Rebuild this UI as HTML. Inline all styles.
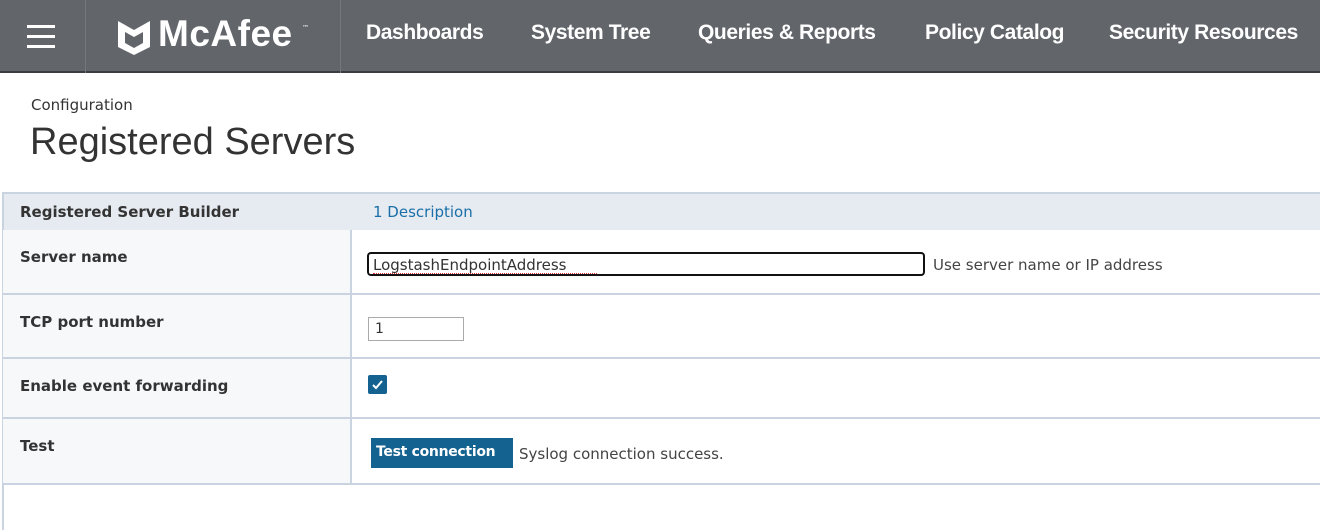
<!DOCTYPE html>
<html><head><style>
*{margin:0;padding:0;box-sizing:border-box}
body{width:1320px;height:530px;overflow:hidden;background:#fff;font-family:"DejaVu Sans","Liberation Sans",sans-serif;position:relative}
.hdr{position:absolute;left:0;top:0;width:1320px;height:73px;background:#62666b;border-bottom:2px solid #3a3c3f}
.div{position:absolute;top:0;width:1px;height:73px;background:#74787d}
.nav{position:absolute;top:21px;color:#fff;font-size:21px;font-family:"Liberation Sans",sans-serif;font-weight:bold;letter-spacing:-0.4px}
.abs{position:absolute}
.lbl{position:absolute;left:20px;font-size:15px;font-weight:bold;color:#333}
.hl{position:absolute;left:2px;width:1318px;height:2px;background:#c9d4e0}
</style></head><body>
<div class="hdr">
 <div class="abs" style="left:27px;top:25px;width:28px;height:3px;background:#fff"></div>
 <div class="abs" style="left:27px;top:35px;width:28px;height:3px;background:#fff"></div>
 <div class="abs" style="left:27px;top:45px;width:28px;height:3px;background:#fff"></div>
 <div class="div" style="left:85px"></div>
 <svg class="abs" style="left:117px;top:20px" width="34" height="36" viewBox="0 0 34 36"><path d="M1 1 L17 10 L33 1 V27 L17 35 L1 27 Z M8 12 V23 L17 28 L26 23 V12 L17 17 Z" fill="#fff" fill-rule="evenodd"/></svg>
 <div class="nav" style="left:158px;top:13px;font-size:37px;letter-spacing:0.5px">McAfee</div>
 <div class="abs" style="left:302px;top:24px;color:#fff;font-size:7px">™</div>
 <div class="div" style="left:340px"></div>
 <div class="nav" style="left:366px">Dashboards</div>
 <div class="nav" style="left:531px">System Tree</div>
 <div class="nav" style="left:698px">Queries &amp; Reports</div>
 <div class="nav" style="left:925px">Policy Catalog</div>
 <div class="nav" style="left:1109px">Security Resources</div>
</div>
<div class="abs" style="left:31px;top:96px;font-size:15px;color:#333">Configuration</div>
<div class="abs" style="left:30px;top:121px;font-size:38px;color:#333;font-family:'Liberation Sans',sans-serif">Registered Servers</div>

<div class="abs" style="left:2px;top:192px;width:1318px;height:38px;background:#e6ebf1;border-top:2px solid #c9d4e0"></div>
<div class="lbl" style="top:203px">Registered Server Builder</div>
<div class="abs" style="left:373px;top:203px;font-size:15px;color:#1a6fa8">1 Description</div>
<div class="abs" style="left:2px;top:192px;width:2px;height:338px;background:#c9d4e0"></div>
<div class="abs" style="left:3px;top:230px;width:348px;height:254px;background:#f7f8fa"></div>
<div class="abs" style="left:350px;top:230px;width:2px;height:254px;background:#c9d4e0"></div>
<div class="hl" style="top:293px"></div>
<div class="hl" style="top:357px"></div>
<div class="hl" style="top:417px"></div>
<div class="hl" style="top:483px"></div>

<div class="lbl" style="top:248px">Server name</div>
<div class="abs" style="left:367px;top:252px;width:558px;height:24px;border:2px solid #111;border-radius:4px;font-size:15px;padding:2px 4px;color:#333">LogstashEndpointAddress<div class="abs" style="left:4px;top:19px;width:224px;border-bottom:1px dotted #d33"></div></div>
<div class="abs" style="left:933px;top:256px;font-size:15px;color:#444">Use server name or IP address</div>

<div class="lbl" style="top:313px">TCP port number</div>
<div class="abs" style="left:368px;top:317px;width:96px;height:24px;border:1px solid #aaa;font-size:14px;padding:3px 6px;color:#333">1</div>

<div class="lbl" style="top:377px">Enable event forwarding</div>
<div class="abs" style="left:368px;top:375px;width:19px;height:19px;background:#14628f;border-radius:2px"><svg width="19" height="19"><path d="M5 10 L8 13 L14 6" stroke="#fff" stroke-width="2" fill="none"/></svg></div>

<div class="lbl" style="top:437px">Test</div>
<div class="abs" style="left:371px;top:438px;width:142px;height:30px;background:#14628f;color:#fff;font-size:14px;font-weight:bold;padding:6px 5px;white-space:nowrap;letter-spacing:-0.3px">Test connection</div>
<div class="abs" style="left:519px;top:445px;font-size:15px;color:#444">Syslog connection success.</div>
</body></html>
